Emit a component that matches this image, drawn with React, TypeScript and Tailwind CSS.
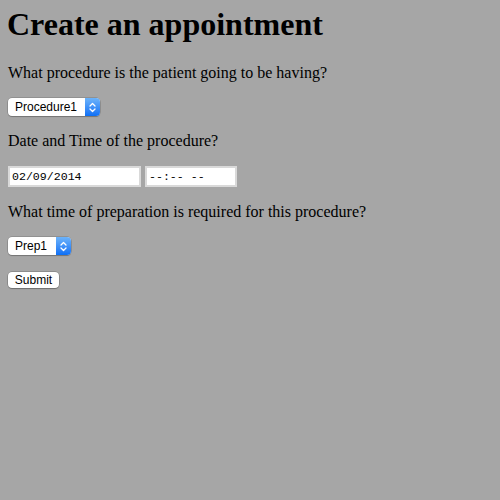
import React from "react";

// Mac-style popup select: white field with the blue stepper cap on the right
function MacSelect({ label, width }: { label: string; width: string }) {
  return (
    <div
      className={`flex h-[18px] ${width} items-stretch rounded-[4px] bg-white shadow-[0_0_0_0.5px_rgba(0,0,0,0.25),0_1px_1px_rgba(0,0,0,0.2)]`}
    >
      <span className="flex-1 pl-[7px] text-[12px] leading-[18px] text-black font-['Liberation_Sans',Arial,sans-serif]">
        {label}
      </span>
      <span className="flex w-[15px] items-center justify-center rounded-r-[4px] bg-gradient-to-b from-[#6cb3fa] to-[#0a6ff5]">
        <svg width="7" height="11" viewBox="0 0 7 11" fill="none">
          <path d="M1 4 L3.5 1.5 L6 4" stroke="white" strokeWidth="1.3" strokeLinecap="round" strokeLinejoin="round" />
          <path d="M1 7 L3.5 9.5 L6 7" stroke="white" strokeWidth="1.3" strokeLinecap="round" strokeLinejoin="round" />
        </svg>
      </span>
    </div>
  );
}

function FieldBox({ text, width }: { text: string; width: string }) {
  return (
    <div
      className={`flex h-[21px] ${width} items-center border-2 border-[#d9d9d9] bg-white pl-[2px] text-[11.6px] text-black font-['Liberation_Mono','Courier_New',monospace]`}
    >
      {text}
    </div>
  );
}

export default function App() {
  return (
    <div className="min-h-[500px] w-full bg-[#a6a6a6] px-[8px] pt-[6px] text-black font-['Liberation_Serif','Times_New_Roman',serif]">
      <h1 className="-ml-[1px] text-[32px] font-bold leading-[37px]">Create an appointment</h1>

      <p className="mt-[21px] text-[16px] leading-[18px]">What procedure is the patient going to be having?</p>
      <div className="mt-[16px]">
        <MacSelect label="Procedure1" width="w-[92px]" />
      </div>

      <p className="mt-[16px] text-[16px] leading-[18px]">Date and Time of the procedure?</p>
      <div className="mt-[16px] flex gap-[4px]">
        <FieldBox text="02/09/2014" width="w-[133px]" />
        <FieldBox text="--:-- --" width="w-[92px]" />
      </div>

      <p className="mt-[16px] text-[16px] leading-[18px]">What time of preparation is required for this procedure?</p>
      <div className="mt-[16px]">
        <MacSelect label="Prep1" width="w-[63px]" />
      </div>

      <div className="mt-[12px]">
        <button className="h-[16px] w-[51px] rounded-[4px] bg-white text-[12px] leading-[16px] text-black shadow-[0_0_0_0.5px_rgba(0,0,0,0.3),0_1px_1px_rgba(0,0,0,0.2)] font-['Liberation_Sans',Arial,sans-serif]">
          Submit
        </button>
      </div>
    </div>
  );
}
